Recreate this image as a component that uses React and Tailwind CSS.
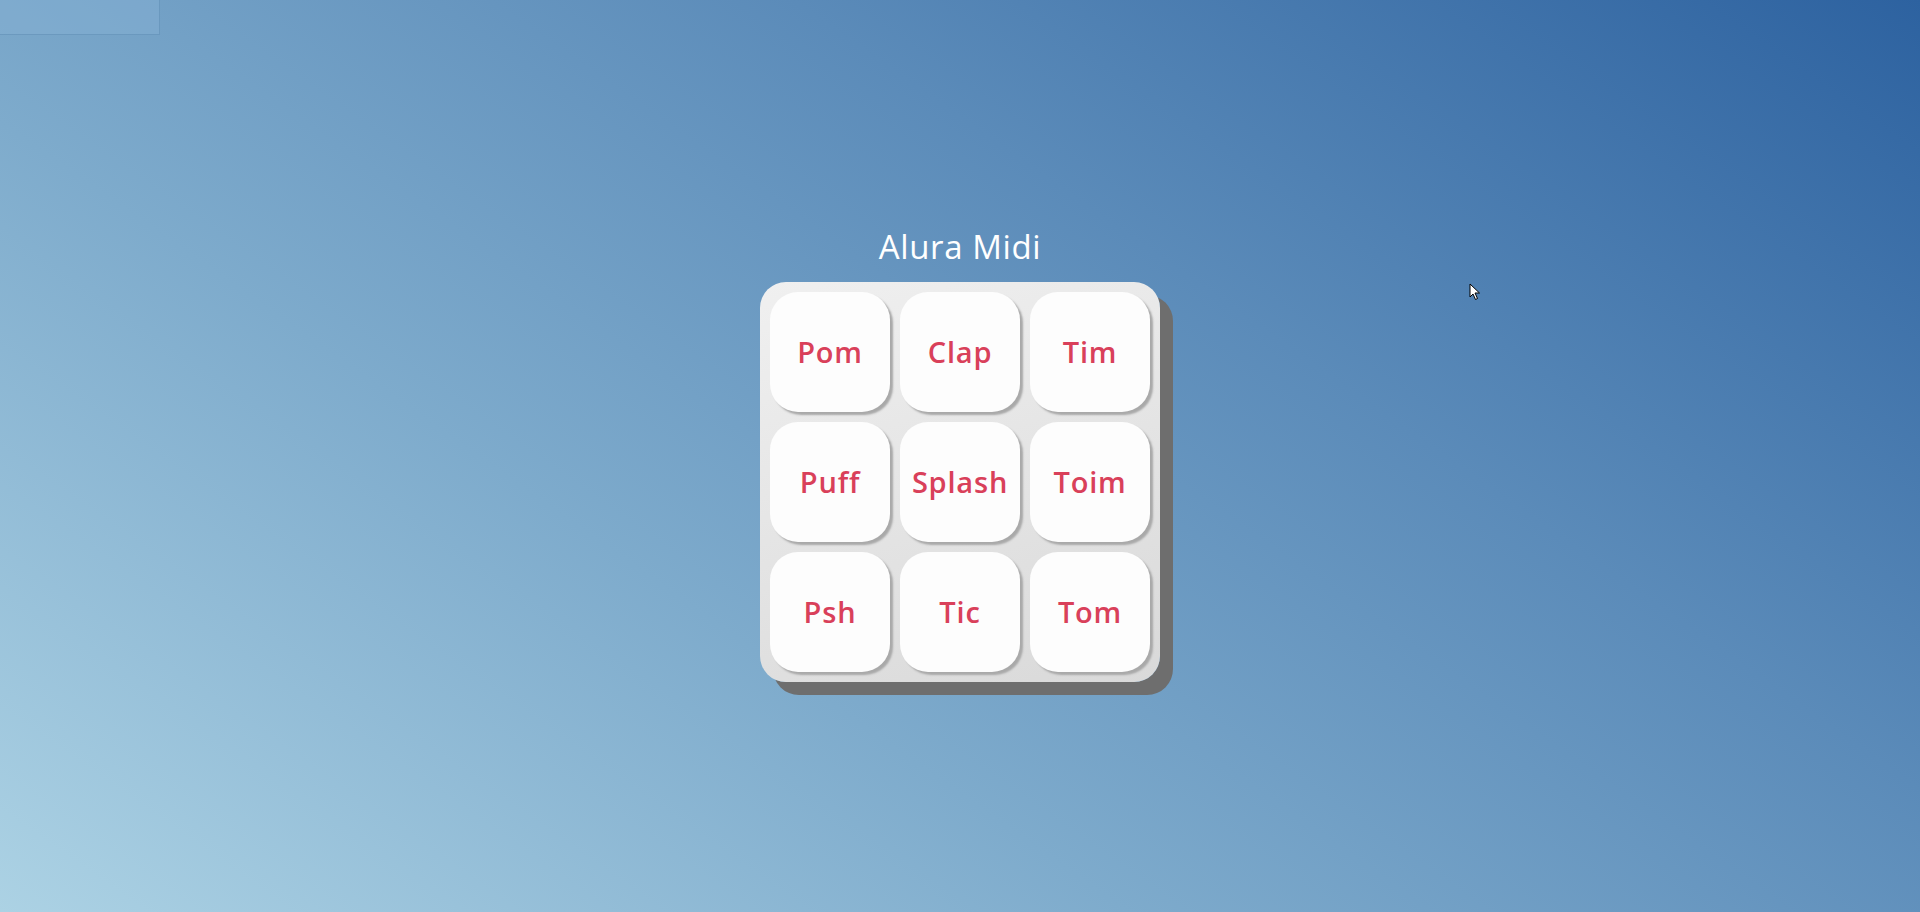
const keys = ['Pom', 'Clap', 'Tim', 'Puff', 'Splash', 'Toim', 'Psh', 'Tic', 'Tom'];

export default function App() {
  return (
    <div className="relative min-h-[912px] w-full overflow-hidden bg-[linear-gradient(35deg,#acd2e4_0%,#7eabcc_35%,#5b8bb9_65%,#2d62a0_100%)] font-['Open_Sans','Noto_Sans',sans-serif]">
      <div className="absolute left-0 top-0 h-[35px] w-[160px] border-b border-r border-[#5f8db4]/60 bg-[#8ab4d6]/40" />

      <main className="flex flex-col items-center pt-[226px]">
        <h1 className="text-[33px] leading-[42px] font-normal tracking-[0.6px] text-white">Alura Midi</h1>

        <section className="mt-[14px] rounded-[26px] bg-[linear-gradient(160deg,#f0f0f0,#d9d9d9)] p-[10px] shadow-[13px_13px_0_#6e6e6e]">
          <div className="grid grid-cols-3 gap-[10px]">
            {keys.map((k) => (
              <button
                key={k}
                className="flex h-[120px] w-[120px] items-center justify-center rounded-[28px] bg-[#fdfdfd] text-[29px] font-semibold tracking-[0.8px] text-[#d9405a] shadow-[3px_3px_2px_#a9a9a9]"
              >
                {k}
              </button>
            ))}
          </div>
        </section>
      </main>

      <svg className="absolute left-[1469px] top-[283px]" width="12" height="18" viewBox="0 0 12 18">
        <path d="M1 1 L1 14 L4 11 L6.5 16.5 L8.5 15.5 L6 10 L10.5 10 Z" fill="#fff" stroke="#000" strokeWidth="1" />
      </svg>
    </div>
  );
}
